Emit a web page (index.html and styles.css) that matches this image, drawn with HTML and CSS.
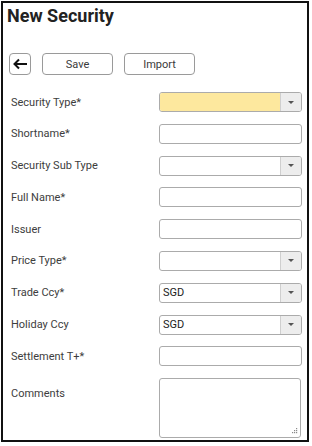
FILE: index.html
```html
<!DOCTYPE html>
<html lang="en">
<head>
    <meta charset="UTF-8">
    <meta name="viewport" content="width=device-width, initial-scale=1.0">
    <title>New Security</title>
    <link rel="stylesheet" href="styles.css">
</head>
<body>
    <div class="panel">
        <h2 class="title">New Security</h2>

        <div class="toolbar">
            <button type="button" class="back-button" aria-label="Back">
                <svg width="16" height="12" viewBox="0 0 16 12">
                    <path d="M15 6H2.5 M7 1.5L2.5 6L7 10.5" fill="none" stroke="#111" stroke-width="2"/>
                </svg>
            </button>
            <button type="button" class="action-button">Save</button>
            <button type="button" class="action-button">Import</button>
        </div>

        <form class="security-form">
            <label>Security Type*</label>
            <div class="select required"><span class="select-value"></span><span class="select-arrow"></span></div>

            <label>Shortname*</label>
            <input type="text" class="text-input">

            <label>Security Sub Type</label>
            <div class="select"><span class="select-value"></span><span class="select-arrow"></span></div>

            <label>Full Name*</label>
            <input type="text" class="text-input">

            <label>Issuer</label>
            <input type="text" class="text-input">

            <label>Price Type*</label>
            <div class="select"><span class="select-value"></span><span class="select-arrow"></span></div>

            <label>Trade Ccy*</label>
            <div class="select"><span class="select-value">SGD</span><span class="select-arrow"></span></div>

            <label>Holiday Ccy</label>
            <div class="select"><span class="select-value">SGD</span><span class="select-arrow"></span></div>

            <label>Settlement T+*</label>
            <input type="text" class="text-input">

            <label class="top-label">Comments</label>
            <div class="comments-wrap">
                <textarea class="comments"></textarea>
                <svg class="grip" width="7" height="7" viewBox="0 0 7 7">
                    <g fill="#8a8a8a">
                        <rect x="5" y="0" width="1.2" height="1.2"/>
                        <rect x="3" y="2" width="1.2" height="1.2"/>
                        <rect x="5" y="2" width="1.2" height="1.2"/>
                        <rect x="1" y="4" width="1.2" height="1.2"/>
                        <rect x="3" y="4" width="1.2" height="1.2"/>
                        <rect x="5" y="4" width="1.2" height="1.2"/>
                    </g>
                </svg>
            </div>
        </form>
    </div>
</body>
</html>
```

FILE: styles.css
```css
body {
    font-family: Roboto, "Liberation Sans", sans-serif;
    background-color: #ffffff;
    color: #333;
    margin: 0;
    padding: 1px;
}
.panel {
    box-sizing: border-box;
    width: 308px;
    height: 441px;
    border: 2px solid #111;
    padding: 2px 5px 2px 4px;
}
.title {
    margin: 0;
    font-size: 18px;
    line-height: 22px;
    font-weight: 700;
    color: #222;
}
.toolbar {
    display: flex;
    gap: 11px;
    margin: 26px 0 0 2px;
}
.back-button, .action-button {
    box-sizing: border-box;
    height: 22px;
    background-color: #fff;
    border: 1px solid #9a9a9a;
    border-radius: 4px;
    font-family: Roboto, "Liberation Sans", sans-serif;
    font-size: 11px;
    color: #3a3a3a;
    cursor: pointer;
    padding: 0;
}
.back-button {
    width: 22px;
    display: flex;
    align-items: center;
    justify-content: center;
}
.action-button {
    width: 71px;
}
.security-form {
    display: grid;
    grid-template-columns: 148px 1fr;
    row-gap: 11.8px;
    align-items: center;
    margin-top: 17px;
    padding-left: 4px;
}
label {
    font-size: 11px;
    color: #3d3d3d;
}
.top-label {
    align-self: start;
    margin-top: 9px;
}
.text-input, .select, .comments {
    box-sizing: border-box;
    border: 1px solid #ababab;
    border-radius: 3px;
    background-color: #fff;
}
.text-input {
    height: 20px;
    width: 100%;
    margin: 0;
    padding: 0 3px;
    font-size: 11px;
}
.select {
    height: 20px;
    display: flex;
    overflow: hidden;
}
.select.required .select-value {
    background-color: #fde89e;
}
.select-value {
    flex: 1;
    font-size: 11px;
    line-height: 18px;
    color: #222;
    padding-left: 3px;
}
.select-arrow {
    width: 20px;
    background-color: #ededed;
    border-left: 1px solid #cfcfcf;
    display: flex;
    align-items: center;
    justify-content: center;
}
.select-arrow::after {
    content: "";
    border-left: 3px solid transparent;
    border-right: 3px solid transparent;
    border-top: 3px solid #555;
}
.comments-wrap {
    position: relative;
    width: 142px;
    height: 60px;
}
.comments {
    display: block;
    height: 60px;
    width: 142px;
    margin: 0;
    resize: none;
    font-family: Roboto, "Liberation Sans", sans-serif;
    font-size: 11px;
}
.grip {
    position: absolute;
    right: 3px;
    bottom: 3px;
}
```
